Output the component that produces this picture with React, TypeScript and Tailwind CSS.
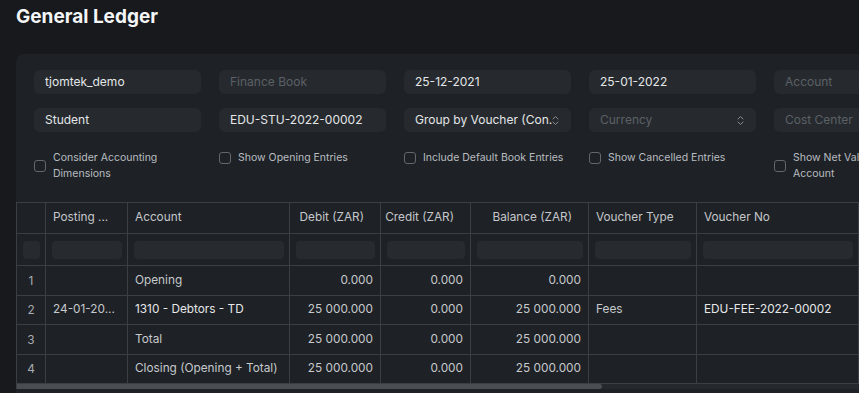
import React from "react";

const colW = [
  "w-[29px]",
  "w-[82px]",
  "w-[162px]",
  "w-[91px]",
  "w-[90px]",
  "w-[118px]",
  "w-[108px]",
  "w-[162px]",
  "w-[160px]",
];

const headers: { label: string; right?: boolean }[] = [
  { label: "" },
  { label: "Posting ..." },
  { label: "Account" },
  { label: "Debit (ZAR)", right: true },
  { label: "Credit (ZAR)", right: true },
  { label: "Balance (ZAR)", right: true },
  { label: "Voucher Type" },
  { label: "Voucher No" },
  { label: "" },
];

type Row = {
  n: string;
  date: string;
  account: string;
  accBright?: boolean;
  debit: string;
  credit: string;
  balance: string;
  vtype: string;
  vno: string;
  h: string;
};

const rows: Row[] = [
  { n: "1", date: "", account: "Opening", debit: "0.000", credit: "0.000", balance: "0.000", vtype: "", vno: "", h: "h-[30px]" },
  { n: "2", date: "24-01-20...", account: "1310 - Debtors - TD", accBright: true, debit: "25 000.000", credit: "0.000", balance: "25 000.000", vtype: "Fees", vno: "EDU-FEE-2022-00002", h: "h-[29px]" },
  { n: "3", date: "", account: "Total", debit: "25 000.000", credit: "0.000", balance: "25 000.000", vtype: "", vno: "", h: "h-[30px]" },
  { n: "4", date: "", account: "Closing (Opening + Total)", debit: "25 000.000", credit: "0.000", balance: "25 000.000", vtype: "", vno: "", h: "h-[29px]" },
];

function Field({ text, placeholder, select }: { text?: string; placeholder?: string; select?: boolean }) {
  return (
    <div className="w-[167px] h-6 shrink-0 rounded-[6px] bg-[#262a2e] flex items-center pl-[11px] pr-[12px] text-xs">
      <span className={"flex-1 whitespace-nowrap overflow-hidden " + (text ? "text-[#e4e6e8]" : "text-[#5c6066]")}>
        {text ?? placeholder}
      </span>
      {select && (
        <svg width="7" height="11" viewBox="0 0 7 11" fill="none" className="shrink-0">
          <path d="M1 4 L3.5 1.5 L6 4" stroke="#8a8e94" strokeWidth="1" strokeLinecap="round" strokeLinejoin="round" />
          <path d="M1 7 L3.5 9.5 L6 7" stroke="#8a8e94" strokeWidth="1" strokeLinecap="round" strokeLinejoin="round" />
        </svg>
      )}
    </div>
  );
}

function Check({ label, w }: { label: string; w: string }) {
  return (
    <div className={"shrink-0 flex items-center gap-[7px] " + w}>
      <div className="w-3 h-3 shrink-0 rounded-[3px] border border-[#63676d]" />
      <span className="text-[10.5px] leading-4 text-[#b9bdc1]">{label}</span>
    </div>
  );
}

export default function App() {
  return (
    <div
      className="w-[859px] h-[393px] overflow-hidden bg-[#17191d]"
      style={{ fontFamily: "Inter, 'Noto Sans', sans-serif" }}
    >
      <div className="h-[54px] pl-4 pt-[3px]">
        <h1 className="text-[19px] leading-[28px] font-bold text-[#f4f5f6]">General Ledger</h1>
      </div>
      <div className="ml-4 w-[1100px] h-[400px] rounded-tl-lg bg-[#1e2125] pt-4">
        <div className="px-[18px]">
          <div className="flex gap-[18px]">
            <Field text="tjomtek_demo" />
            <Field placeholder="Finance Book" />
            <Field text="25-12-2021" />
            <Field text="25-01-2022" />
            <Field placeholder="Account" />
          </div>
          <div className="flex gap-[18px] mt-[14px]">
            <Field text="Student" />
            <Field text="EDU-STU-2022-00002" />
            <Field text="Group by Voucher (Con..." select />
            <Field placeholder="Currency" select />
            <Field placeholder="Cost Center" />
          </div>
          <div className="flex gap-[18px] mt-[18px] items-start">
            <div className="w-[167px] shrink-0 h-8 flex items-center">
              <Check label="Consider Accounting Dimensions" w="w-[150px]" />
            </div>
            <Check label="Show Opening Entries" w="w-[167px]" />
            <Check label="Include Default Book Entries" w="w-[167px]" />
            <Check label="Show Cancelled Entries" w="w-[167px]" />
            <div className="w-[167px] shrink-0 h-8 flex items-center">
              <Check label="Show Net Values in Party Account" w="w-[150px]" />
            </div>
          </div>
        </div>

        <div className="mt-[20px] border-t border-l border-[#3b3e43] w-max text-[11.8px]">
          {/* header */}
          <div className="flex h-[31px] border-b border-[#3b3e43]">
            {headers.map((h, i) => (
              <div
                key={i}
                className={
                  colW[i] +
                  " shrink-0 border-r border-[#3b3e43] flex items-center pb-[1px] text-[#c4c7cb] " +
                  (h.right ? "justify-end pr-4" : "pl-[7px]")
                }
              >
                {h.label}
              </div>
            ))}
          </div>
          {/* filter row */}
          <div className="flex h-8 border-b border-[#3b3e43]">
            {headers.map((_, i) => (
              <div
                key={i}
                className={colW[i] + " shrink-0 border-r border-[#3b3e43] flex items-center pl-[6px] pr-[5px]"}
              >
                <div className="w-full h-[18px] rounded-[4px] bg-[#272a2f]" />
              </div>
            ))}
          </div>
          {rows.map((r) => {
            const cells: { v: string; right?: boolean; bright?: boolean; center?: boolean }[] = [
              { v: r.n, center: true },
              { v: r.date },
              { v: r.account, bright: r.accBright },
              { v: r.debit, right: true },
              { v: r.credit, right: true },
              { v: r.balance, right: true },
              { v: r.vtype },
              { v: r.vno, bright: true },
              { v: "" },
            ];
            return (
              <div key={r.n} className={"flex border-b border-[#3b3e43] " + r.h}>
                {cells.map((c, i) => (
                  <div
                    key={i}
                    className={
                      colW[i] +
                      " shrink-0 border-r border-[#3b3e43] flex items-center whitespace-nowrap overflow-hidden " +
                      (c.center
                        ? "justify-center pt-[2px] text-[#a9adb2]"
                        : c.right
                        ? "justify-end pr-[7px] text-[#c6c9cd]"
                        : "pl-[7px] " + (c.bright ? "text-[#e6e8ea]" : "text-[#c6c9cd]"))
                    }
                  >
                    {c.v}
                  </div>
                ))}
              </div>
            );
          })}
          <div className="h-[5px] bg-[#25282c] flex">
            <div className="w-[585px] h-full rounded-r-full bg-[#4a4d52]" />
          </div>
        </div>
      </div>
    </div>
  );
}
